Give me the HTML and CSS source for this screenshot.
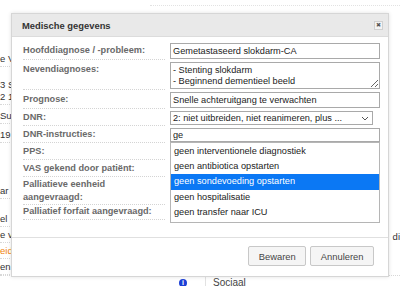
FILE: index.html
```html
<!DOCTYPE html>
<html lang="nl">
<head>
    <meta charset="UTF-8">
    <meta name="viewport" content="width=device-width, initial-scale=1.0">
    <title>Medische gegevens</title>
    <link rel="stylesheet" href="styles.css">
</head>
<body>
    <div class="page">
        <div class="topline"></div>
        <div class="main">
            <ul class="side">
                <li class="s1">e Vraag</li>
                <li class="s2">3 S<br>2 1</li>
                <li class="s3">Su</li>
                <li class="s4">19</li>
                <li class="s5">ar</li>
                <li class="s6">el</li>
                <li class="s7">e v</li>
                <li class="s8 orange">eid</li>
                <li class="s9">en</li>
            </ul>
            <div class="rest">
                <span class="di">di</span>
            </div>
        </div>
        <div class="bottom">
            <div class="icon-cell"><span class="info">i</span></div>
            <div class="bottom-title">Sociaal</div>
        </div>
    </div>

    <div class="dialog">
        <div class="dlg-head">
            <span class="dlg-title">Medische gegevens</span>
            <span class="dlg-close">&#10006;</span>
        </div>
        <div class="dlg-body">
            <div class="row">
                <label class="lbl">Hoofddiagnose / -probleem:</label>
                <div class="fld"><input class="txt" type="text" value="Gemetastaseerd slokdarm-CA"></div>
            </div>
            <div class="row">
                <label class="lbl">Nevendiagnoses:</label>
                <div class="fld"><textarea class="area">- Stenting slokdarm
- Beginnend dementieel beeld</textarea></div>
            </div>
            <div class="row">
                <label class="lbl">Prognose:</label>
                <div class="fld"><input class="txt" type="text" value="Snelle achteruitgang te verwachten"></div>
            </div>
            <div class="row tight">
                <label class="lbl">DNR:</label>
                <div class="fld">
                    <div class="sel">
                        <span>2: niet uitbreiden, niet reanimeren, plus ...</span>
                        <svg width="8" height="5" viewBox="0 0 8 5"><path d="M1 1 L4 4 L7 1" fill="none" stroke="#555" stroke-width="1"/></svg>
                    </div>
                </div>
            </div>
            <div class="row tight">
                <label class="lbl">DNR-instructies:</label>
                <div class="fld drop-wrap">
                    <input class="txt short" type="text" value="ge">
                    <ul class="drop">
                        <li>geen interventionele diagnostiek</li>
                        <li>geen antibiotica opstarten</li>
                        <li class="active">geen sondevoeding opstarten</li>
                        <li>geen hospitalisatie</li>
                        <li>geen transfer naar ICU</li>
                    </ul>
                </div>
            </div>
            <div class="row plain pps">
                <label class="lbl">PPS:</label>
                <div class="fld"></div>
            </div>
            <div class="row plain vas">
                <label class="lbl">VAS gekend door patiënt:</label>
                <div class="fld"></div>
            </div>
            <div class="row plain pal">
                <label class="lbl">Palliatieve eenheid<br>aangevraagd:</label>
                <div class="fld"></div>
            </div>
            <div class="row plain forfait">
                <label class="lbl">Palliatief forfait aangevraagd:</label>
                <div class="fld"></div>
            </div>
        </div>
        <div class="dlg-foot">
            <button class="btn">Bewaren</button>
            <button class="btn">Annuleren</button>
        </div>
    </div>

    <svg class="cursor" width="12" height="15" viewBox="0 0 12 15">
        <path d="M3.6 1.4 Q3.6 0.5 4.5 0.5 Q5.4 0.5 5.4 1.4 V6 Q5.4 5.2 6.2 5.2 Q7.1 5.2 7.1 6 V6.8 Q7.1 6 7.9 6 Q8.8 6 8.8 6.8 V7.5 Q8.8 6.8 9.6 6.8 Q10.5 6.8 10.5 7.7 V10.8 Q10.5 14.4 7.2 14.4 H6 Q4.3 14.4 3.3 12.6 L1 9.2 Q0.6 8.4 1.3 8 Q2 7.6 2.7 8.4 L3.6 9.5 Z" fill="#fff" stroke="#111" stroke-width="0.8" stroke-linejoin="round"/>
        <path d="M5.4 6.4 V9.5 M7.1 7 V9.5 M8.8 7.6 V9.5" stroke="#111" stroke-width="0.6"/>
    </svg>
</body>
</html>
```

FILE: styles.css
```css
*{
    margin: 0px;
    padding: 0px;
    box-sizing: border-box;
    list-style: none;
}
body{
    width: 400px;
    height: 286px;
    overflow: hidden;
    position: relative;
    background-color: #fff;
    font-family: "Liberation Sans", Arial, sans-serif;
    font-size: 9.2px;
    color: #333;
}

/* page behind the dialog */
.topline{
    height: 6px;
    margin-left: 150px;
    border-bottom: 1px dotted #e2e2e2;
}
.main{
    height: 269px;
    display: flex;
}
.side{
    width: 24px;
    overflow: hidden;
    white-space: nowrap;
    font-size: 9.5px;
    line-height: 12px;
}
.side li{
    padding: 2px 0px 1px;
    border-bottom: 1px dotted #d8d8d8;
}
.side .s1{ padding-top: 47px; }
.side .s2{ padding-top: 12px; }
.side .s3{ padding-top: 5px; }
.side .s4{ padding-top: 5px; }
.side .s5{ padding-top: 42px; }
.side .s6{ padding-top: 14px; }
.orange{
    color: #f0830f;
}
.rest{
    flex: 1;
    padding-top: 225px;
    padding-left: 369px;
    font-size: 9.5px;
}
.bottom{
    display: flex;
    border-top: 1px dotted #d8d8d8;
    height: 11px;
}
.icon-cell{
    width: 206px;
    padding-right: 18px;
    padding-top: 3px;
    border-right: 1px solid #e2e2e2;
    display: flex;
    justify-content: flex-end;
}
.info{
    width: 8px;
    height: 8px;
    border-radius: 50%;
    background-color: #1c3fd6;
    color: #fff;
    font-size: 7px;
    font-weight: bold;
    line-height: 8px;
    text-align: center;
}
.bottom-title{
    padding-left: 7px;
    padding-top: 1px;
    font-size: 10px;
    color: #444;
}

/* dialog */
.dialog{
    position: absolute;
    left: 11px;
    top: 13px;
    width: 378px;
    height: 264px;
    background-color: #fff;
    border: 1px solid #d6d6d6;
    box-shadow: 0px 0px 4px rgba(0, 0, 0, .12);
    display: flex;
    flex-direction: column;
}
.dlg-head{
    height: 23px;
    background-color: #e9e9e9;
    border-bottom: 1px solid #dcdcdc;
    display: flex;
    align-items: center;
    justify-content: space-between;
    padding: 0px 5px 0px 10px;
}
.dlg-title{
    font-weight: bold;
    font-size: 9.4px;
    color: #333;
}
.dlg-close{
    width: 9px;
    height: 9px;
    border: 1px solid #d0d0d0;
    background-color: #f3f3f3;
    color: #555;
    font-size: 6px;
    line-height: 7px;
    text-align: center;
}
.dlg-body{
    flex: 1;
    padding: 4px 8px 0px 11px;
}
.row{
    display: grid;
    grid-template-columns: 142px 1fr;
    column-gap: 5px;
}
.lbl{
    font-weight: bold;
    color: #6a6a6a;
    line-height: 15px;
    padding: 2px 0px 1px;
    border-bottom: 1px dotted #d4d4d4;
}
.fld{
    padding-top: 2px;
    padding-bottom: 1px;
}
.tight .lbl{
    line-height: 14px;
    padding-top: 1px;
}
.txt{
    display: block;
    width: 100%;
    height: 16px;
    border: 1px solid #a9a9a9;
    padding: 0px 2px;
    font-family: "Liberation Sans", Arial, sans-serif;
    font-size: 9.2px;
    color: #222;
    outline: none;
}
.txt.short{
    height: 14px;
}
.area{
    display: block;
    width: 100%;
    height: 27px;
    border: 1px solid #a9a9a9;
    padding: 2px 2px 0px;
    font-family: "Liberation Sans", Arial, sans-serif;
    font-size: 9.2px;
    line-height: 10.5px;
    color: #222;
    overflow: hidden;
}
.sel{
    width: 203px;
    height: 14px;
    border: 1px solid #a9a9a9;
    padding: 0px 3px 0px 2px;
    display: flex;
    align-items: center;
    justify-content: space-between;
    color: #222;
}
.drop-wrap{
    position: relative;
}
.drop{
    position: absolute;
    left: 0px;
    right: 0px;
    top: 16px;
    z-index: 2;
    background-color: #fff;
    border: 1px solid #b5b5b5;
    padding: 1px 0px 2px;
}
.drop li{
    line-height: 15.2px;
    padding-left: 3px;
    color: #222;
}
.drop li.active{
    background-color: #0b78f4;
    color: #fff;
}
.plain .lbl{
    line-height: 13px;
    padding: 1px 0px 1px;
}
.pps .lbl{
    padding-top: 2px;
}
.vas .lbl{
    padding-top: 2px;
}
.pal .lbl{
    padding-bottom: 0px;
}
.forfait .lbl{
    padding-top: 0px;
}
.dlg-foot{
    height: 39px;
    border-top: 1px solid #e0e0e0;
    display: flex;
    justify-content: flex-end;
    gap: 4px;
    padding: 8px 14px 0px 0px;
}
.btn{
    height: 20px;
    padding: 0px 9.5px;
    border: 1px solid #c8c8c8;
    border-radius: 2px;
    background-color: #f5f5f5;
    font-family: "Liberation Sans", Arial, sans-serif;
    font-size: 9.4px;
    color: #454545;
}
.cursor{
    position: absolute;
    left: 354px;
    top: 178px;
}
```
